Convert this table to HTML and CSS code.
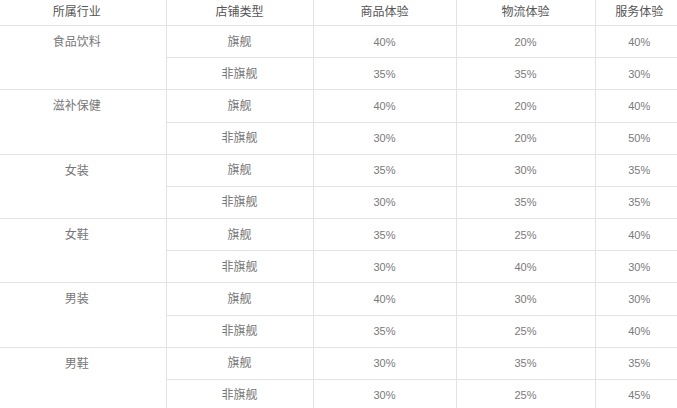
FILE: index.html
```html
<!DOCTYPE html>
<html lang="zh">
<head>
<meta charset="utf-8">
<link rel="stylesheet" href="styles.css">
</head>
<body>
<table class="grid">
  <colgroup>
    <col class="c1"><col class="c2"><col class="c3"><col class="c4"><col class="c5">
  </colgroup>
  <thead>
    <tr><th class="first">所属行业</th><th>店铺类型</th><th>商品体验</th><th>物流体验</th><th>服务体验</th></tr>
  </thead>
  <tbody>
    <tr><td class="first" rowspan="2">食品饮料</td><td>旗舰</td><td class="num">40%</td><td class="num">20%</td><td class="num">40%</td></tr>
    <tr><td>非旗舰</td><td class="num">35%</td><td class="num">35%</td><td class="num">30%</td></tr>
    <tr><td class="first" rowspan="2">滋补保健</td><td>旗舰</td><td class="num">40%</td><td class="num">20%</td><td class="num">40%</td></tr>
    <tr><td>非旗舰</td><td class="num">30%</td><td class="num">20%</td><td class="num">50%</td></tr>
    <tr><td class="first" rowspan="2">女装</td><td>旗舰</td><td class="num">35%</td><td class="num">30%</td><td class="num">35%</td></tr>
    <tr><td>非旗舰</td><td class="num">30%</td><td class="num">35%</td><td class="num">35%</td></tr>
    <tr><td class="first" rowspan="2">女鞋</td><td>旗舰</td><td class="num">35%</td><td class="num">25%</td><td class="num">40%</td></tr>
    <tr><td>非旗舰</td><td class="num">30%</td><td class="num">40%</td><td class="num">30%</td></tr>
    <tr><td class="first" rowspan="2">男装</td><td>旗舰</td><td class="num">40%</td><td class="num">30%</td><td class="num">30%</td></tr>
    <tr><td>非旗舰</td><td class="num">35%</td><td class="num">25%</td><td class="num">40%</td></tr>
    <tr><td class="first" rowspan="2">男鞋</td><td>旗舰</td><td class="num">30%</td><td class="num">35%</td><td class="num">35%</td></tr>
    <tr><td>非旗舰</td><td class="num">30%</td><td class="num">25%</td><td class="num">45%</td></tr>
  </tbody>
</table>
</body>
</html>
```

FILE: styles.css
```css
html, body {
  margin: 0;
  padding: 0;
  background: #ffffff;
  overflow: hidden;
}

.grid {
  border-collapse: collapse;
  table-layout: fixed;
  width: 683px;
  font-family: "Liberation Sans", "Noto Sans CJK SC", sans-serif;
  font-size: 12px;
  line-height: 16px;
}

.c1 { width: 166px; }
.c2 { width: 147px; }
.c3 { width: 143px; }
.c4 { width: 139px; }
.c5 { width: 88px; }

.grid th,
.grid td {
  text-align: center;
  padding: 0;
  border: 1px solid #e3e3e3;
}

.grid th {
  font-weight: normal;
  color: #555555;
  height: 23px;
  padding-bottom: 2px;
  border-top: none;
  vertical-align: middle;
}

.grid td {
  color: #777777;
  height: 31.18px;
  vertical-align: middle;
}

.grid td.num {
  font-size: 11px;
  color: #7a7a7a;
}

.grid th:first-child,
.grid td.first {
  border-left: none;
  padding-right: 12px;
}

.grid td.first {
  vertical-align: top;
  padding-top: 8px;
}

.grid th:last-child,
.grid td:last-child {
  border-right: none;
}
```
